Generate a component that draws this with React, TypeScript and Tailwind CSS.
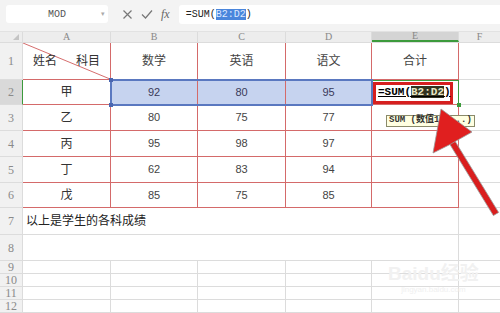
import React from 'react';

const sans = "font-['Liberation_Sans','Noto_Sans_CJK_SC',sans-serif]";
const serif = "font-['Liberation_Serif','Noto_Sans_CJK_SC',serif]";
const mono = "font-['Liberation_Mono','Noto_Sans_CJK_SC',monospace]";

const colW = ['w-[88px]', 'w-[87px]', 'w-[88px]', 'w-[86px]', 'w-[87px]'];
const RED = 'border-[#d46a6a]';
const GRID = 'border-[#dcdcdc]';

type Row = { n: string; h: string; cells: string[] };

const tableRows: Row[] = [
  { n: '3', h: 'h-[26px]', cells: ['乙', '80', '75', '77', ''] },
  { n: '4', h: 'h-[26px]', cells: ['丙', '95', '98', '97', ''] },
  { n: '5', h: 'h-[26px]', cells: ['丁', '62', '83', '94', ''] },
  { n: '6', h: 'h-[25px]', cells: ['戊', '85', '75', '85', ''] },
];

function RowHead({ n, h, active }: { n: string; h: string; active?: boolean }) {
  return (
    <div
      className={`${h} w-[23px] shrink-0 flex items-center justify-center border-r border-b ${GRID} ${serif} text-[12px] text-[#8a8a8a] ${
        active ? 'bg-[#d9d9d9] border-r-[#3c9a3c]' : 'bg-[#f1f1f1]'
      }`}
    >
      {n}
    </div>
  );
}

function Arrow() {
  return (
    <svg className="absolute left-0 top-0 pointer-events-none" width="500" height="313">
      <polygon
        points="449.4,143.6 454.6,140.4 498.6,212.4 493.4,215.6"
        fill="#d91e1e"
        stroke="#9a9a9a"
        strokeWidth="0.8"
      />
      <polygon points="441,109 472,132 456,141 451,144 433,153" fill="#e01f1f" stroke="#9a9a9a" strokeWidth="0.8" />
    </svg>
  );
}

export default function App() {
  return (
    <div className={`relative w-[500px] h-[313px] overflow-hidden bg-white ${sans} text-[#333]`}>
      {/* formula bar */}
      <div className="h-[32px] bg-[#f3f3f3] flex items-start pt-[5px] border-b border-[#e2e2e2]">
        <div className="ml-[6px] w-[102px] h-[18px] bg-white rounded-[3px] flex items-center relative">
          <span className={`flex-1 text-center ${mono} text-[10px] text-[#555]`}>MOD</span>
          <span className="absolute right-[3px] text-[7px] text-[#aaa]">▾</span>
        </div>
        <div className="flex items-center h-[18px] ml-[14px] gap-[8px] text-[#777]">
          <svg width="11" height="11" viewBox="0 0 11 11">
            <path d="M1.5 1.5 L9.5 9.5 M9.5 1.5 L1.5 9.5" stroke="#777" strokeWidth="1.2" fill="none" />
          </svg>
          <svg width="12" height="11" viewBox="0 0 12 11">
            <path d="M1 5.5 L4.5 9 L11 1.5" stroke="#777" strokeWidth="1.2" fill="none" />
          </svg>
          <span className={`${serif} italic text-[12px] text-[#666]`}>fx</span>
        </div>
        <div className="ml-[9px] flex-1 h-[19px] bg-white rounded-l-[3px] flex items-center pl-[7px]">
          <span className={`${mono} text-[10px] text-[#222]`}>
            =SUM(<span className="bg-[#4a86dc] text-[#dde8ff]">B2:D2</span>)
          </span>
        </div>
      </div>

      {/* column headers */}
      <div className={`flex h-[11px] bg-[#ededed] border-b ${GRID} ${serif} text-[10px] text-[#888] leading-none`}>
        <div className="w-[23px] shrink-0 border-r border-[#dcdcdc] relative">
          <div className="absolute right-[3px] bottom-[2px] w-0 h-0 border-l-[6px] border-l-transparent border-b-[6px] border-b-[#c4c4c4]" />
        </div>
        {['A', 'B', 'C', 'D'].map((c, i) => (
          <div key={c} className={`${colW[i]} shrink-0 flex items-center justify-center border-r ${GRID}`}>
            {c}
          </div>
        ))}
        <div className={`${colW[4]} shrink-0 flex items-center justify-center bg-[#d4d4d4] border-b-2 border-b-[#3c9a3c] border-r ${GRID}`}>
          E
        </div>
        <div className="flex-1 flex items-center justify-center">F</div>
      </div>

      {/* row 1 */}
      <div className="flex h-[37px]">
        <RowHead n="1" h="h-[37px]" />
        <div className={`${colW[0]} shrink-0 relative border-r border-b ${RED} flex items-center justify-between px-[10px] text-[12px]`}>
          <svg className="absolute inset-0" width="100%" height="100%" preserveAspectRatio="none" viewBox="0 0 88 37">
            <line x1="0" y1="0" x2="88" y2="37" stroke="#d46a6a" strokeWidth="1" />
          </svg>
          <span className="relative">姓名</span>
          <span className="relative">科目</span>
        </div>
        {['数学', '英语', '语文', '合计'].map((t, i) => (
          <div key={t} className={`${colW[i + 1]} shrink-0 flex items-center justify-center border-r border-b ${RED} text-[12px] text-[#444]`}>
            {t}
          </div>
        ))}
        <div className={`flex-1 border-b ${GRID}`} />
      </div>

      {/* row 2 */}
      <div className="flex h-[25px]">
        <RowHead n="2" h="h-[25px]" active />
        <div className={`${colW[0]} shrink-0 flex items-center justify-center border-r border-b ${RED} text-[12px]`}>甲</div>
        {['92', '80', '95'].map((t, i) => (
          <div key={i} className={`${colW[i + 1]} shrink-0 flex items-center justify-center bg-[#c6d3ef] border-r border-b ${RED} text-[11px] text-[#3a3a5a]`}>
            {t}
          </div>
        ))}
        <div className={`${colW[4]} shrink-0 flex items-center border-b ${RED} border-r border-r-[#3c9a3c] border-t border-t-[#3c9a3c] pl-[1px]`}>
          <div className={`w-[80px] h-[22px] border-[3px] border-[#d61f1f] flex items-center pl-[2px] ${mono} text-[11px] font-bold text-black`}>
            <span className="underline">
              =SUM(<span className="bg-[#33331f] text-[#e8e8c8]">B2:D2</span>)
            </span>
          </div>
        </div>
        <div className={`flex-1 border-b ${GRID}`} />
      </div>

      {/* rows 3-6 */}
      {tableRows.map((r) => (
        <div key={r.n} className={`flex ${r.h}`}>
          <RowHead n={r.n} h={r.h} />
          {r.cells.map((t, i) => (
            <div
              key={i}
              className={`${colW[i]} shrink-0 flex items-center justify-center border-r border-b ${RED} ${
                i === 0 ? 'text-[12px]' : 'text-[11px] text-[#444]'
              }`}
            >
              {t}
            </div>
          ))}
          <div className={`flex-1 border-b ${GRID}`} />
        </div>
      ))}

      {/* row 7 */}
      <div className="flex h-[27px]">
        <RowHead n="7" h="h-[27px]" />
        <div className={`w-[436px] shrink-0 flex items-center pl-[3px] border-r border-b ${GRID} text-[12px] text-[#222]`}>
          以上是学生的各科成绩
        </div>
        <div className={`flex-1 border-b ${GRID}`} />
      </div>

      {/* row 8 */}
      <div className="flex h-[26px]">
        <RowHead n="8" h="h-[26px]" />
        <div className={`w-[436px] shrink-0 border-r border-b ${GRID}`} />
        <div className={`flex-1 border-b ${GRID}`} />
      </div>

      {/* rows 9-12 */}
      {['9', '10', '11', '12'].map((n) => (
        <div key={n} className="flex h-[13px]">
          <RowHead n={n} h="h-[13px]" />
          {colW.map((w, i) => (
            <div key={i} className={`${w} shrink-0 border-r border-b ${GRID}`} />
          ))}
          <div className={`flex-1 border-b ${GRID}`} />
        </div>
      ))}

      {/* selection B2:D2 */}
      <div className="absolute left-[110px] top-[79px] w-[263px] h-[27px] border-2 border-[#5a78c0] pointer-events-none" />
      <div className="absolute left-[109px] top-[78px] w-[4px] h-[4px] bg-[#4a66b0]" />
      <div className="absolute left-[109px] top-[103px] w-[4px] h-[4px] bg-[#4a66b0]" />
      <div className="absolute left-[457px] top-[103px] w-[4px] h-[4px] bg-[#3c9a3c]" />

      {/* function tooltip */}
      <div className={`absolute left-[386px] top-[115px] h-[12px] px-[2px] flex items-center bg-[#ffffe1] border border-[#8a8a6a] ${mono} text-[9px] font-bold text-[#333] whitespace-nowrap`}>
        SUM (数值1, ...)
      </div>

      {/* baidu watermark */}
      <div className="absolute left-[388px] top-[264px] flex flex-col items-center pointer-events-none">
        <span className={`${sans} text-[19px] font-bold leading-none text-[#f1f1f1]`}>Baidu经验</span>
        <span className={`${sans} text-[8px] leading-none mt-[3px] text-[#f0f0f0]`}>jingyan.baidu.com</span>
      </div>

      <Arrow />
    </div>
  );
}
